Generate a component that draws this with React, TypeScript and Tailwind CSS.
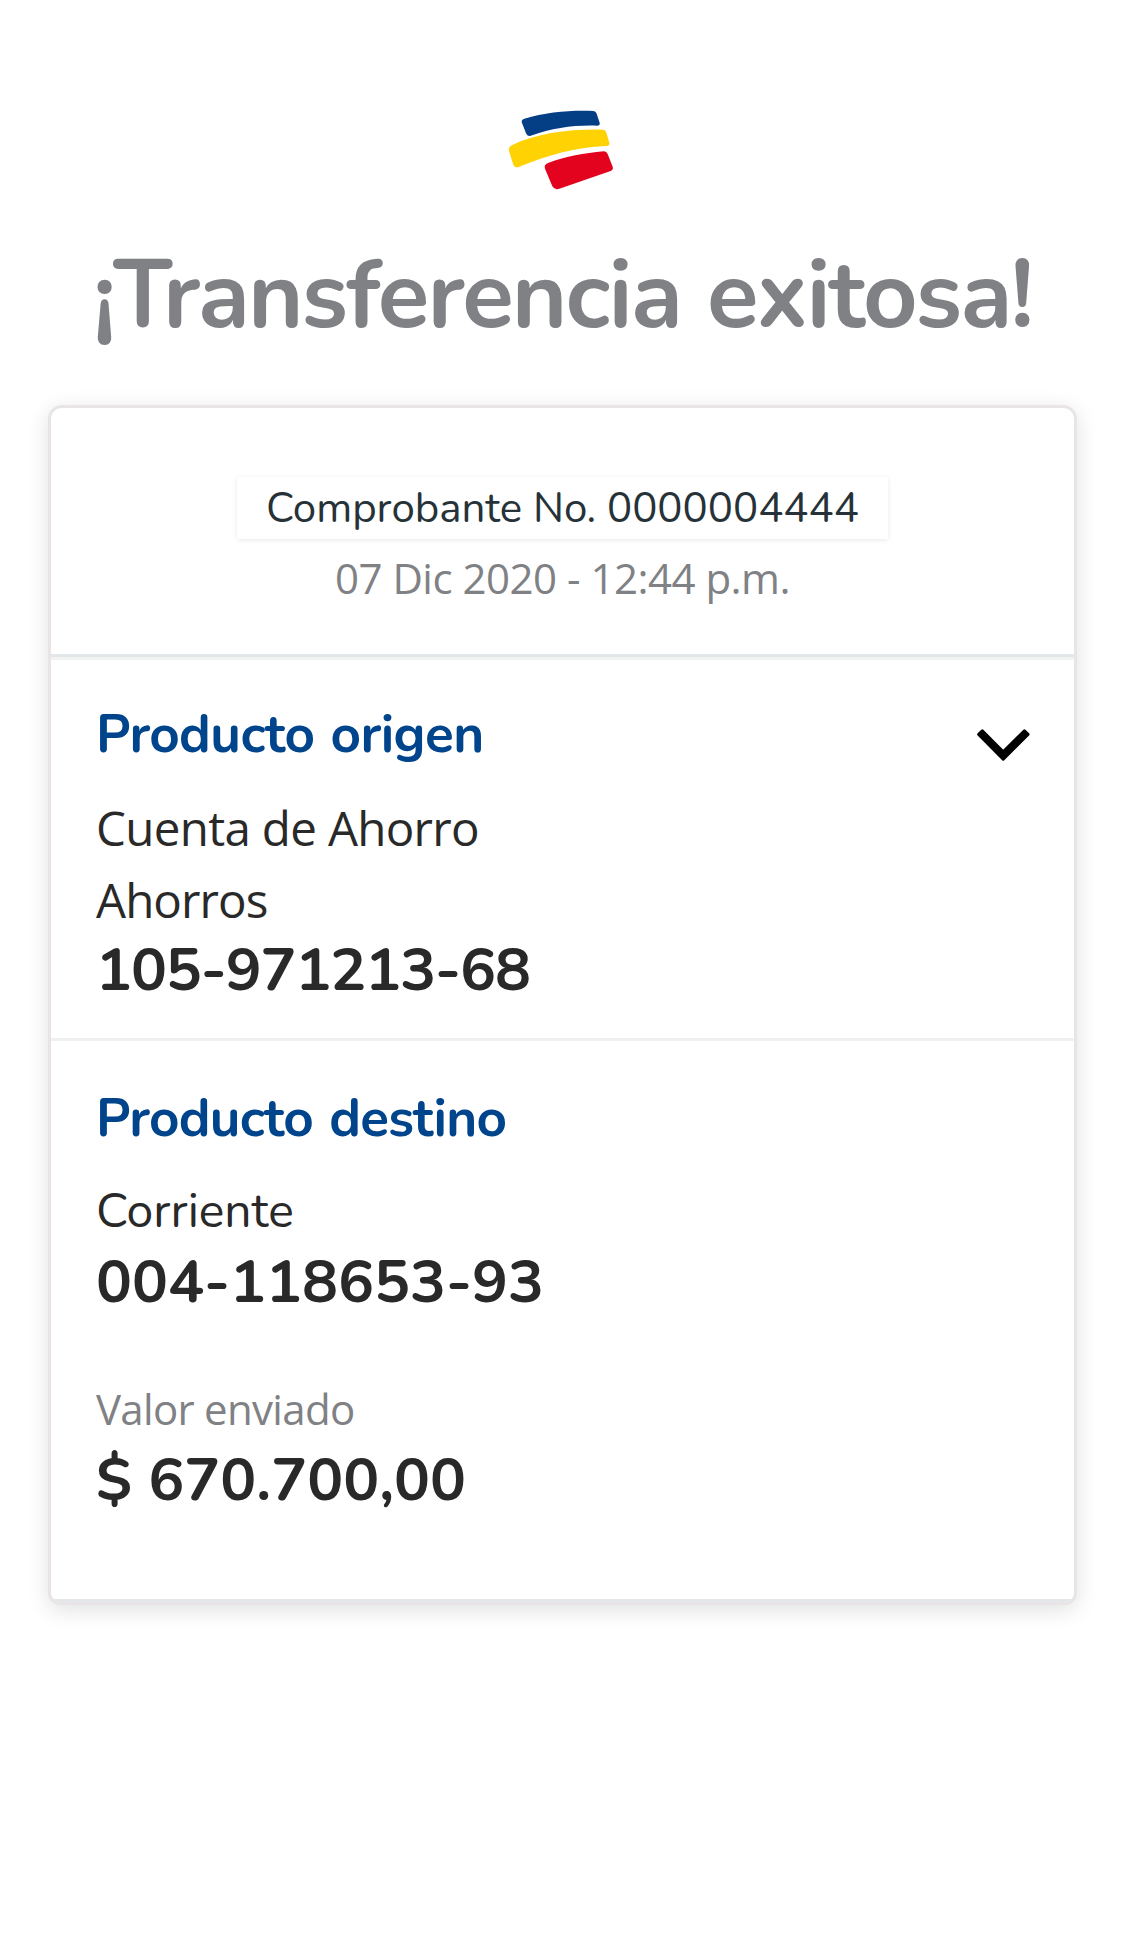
import React from 'react';

const nunito = "font-['Nunito','Lato',sans-serif]";
const openSans = "font-['Open_Sans','Noto_Sans',sans-serif]";

function Logo() {
  return (
    <svg className="h-[90px] w-[125px]" viewBox="30 45 375 270" aria-label="Bancolombia">
      <path
        fill="#043f85"
        d="M96 99 Q92 90 103 86 C170 65 250 60 310 63 Q318 63 320 71 L329 98 Q331 107 321 107 C250 105 190 114 122 137 Q112 140 108 130 Z"
      />
      <path
        fill="#ffd203"
        d="M57 183 Q55 170 67 165 C140 130 240 117 338 119 Q347 119 349 128 L358 158 Q360 167 350 168 C250 172 170 198 88 230 Q74 235 70 224 Z"
      />
      <path
        fill="#e3031e"
        d="M165 236 Q161 224 174 219 C230 199 280 190 342 184 Q350 184 353 192 L368 230 Q371 239 362 243 L208 296 Q194 301 187 289 Z"
      />
    </svg>
  );
}

function Chevron() {
  return (
    <svg className="h-9 w-14" viewBox="974 727 56 36">
      <path
        d="M977.7 734.4 L981.3 730.9 L1002.2 751.8 L1023.4 730.9 L1027 734.4 L1002.2 759.2 Z"
        fill="#000"
        stroke="#000"
        strokeWidth="3"
        strokeLinejoin="round"
      />
    </svg>
  );
}

export default function App() {
  return (
    <main className="flex min-h-[1941px] w-full flex-col items-center bg-white pt-[105px]">
      <Logo />
      <h1
        className={`${nunito} mt-10 whitespace-nowrap pt-px text-[95px] font-bold leading-[120px] tracking-[-1.83px] text-[#808185] [word-spacing:2px]`}
      >
        ¡Transferencia exitosa!
      </h1>

      <section className="mt-[49px] flex h-[1200px] w-[1029px] flex-col overflow-hidden rounded-[14px] rounded-b-[12px] border-[3px] border-[#e9e5e6] bg-white shadow-[0_5px_22px_rgba(0,0,0,0.12)]">
        <header className="flex h-[252px] flex-col items-center border-b-[3px] border-[#f1f2f2] pt-[69px] shadow-[inset_0_-3px_0_#e3e7ea]">
          <div
            className={`${nunito} h-[62px] w-[651px] text-center text-[42px] leading-[64px] text-[#263238] shadow-[0_1px_5px_rgba(0,0,0,0.09)]`}
          >
            Comprobante No. 0000004444
          </div>
          <div
            className={`${openSans} mt-[9px] text-[42px] leading-[60px] tracking-[-0.5px] text-[#808185]`}
          >
            07 Dic 2020 - 12:44 p.m.
          </div>
        </header>

        <div className="flex h-[381px] items-start justify-between border-b-[3px] border-[#f0f0f0] pl-[45px] pr-[43px] pt-[45px]">
          <div>
            <h2
              className={`${nunito} text-[53px] font-bold leading-[60px] tracking-[-0.6px] text-[#00448c] [word-spacing:2.5px]`}
            >
              Producto origen
            </h2>
            <p
              className={`${openSans} mt-[27px] text-[47.5px] leading-[72px] tracking-[-0.67px] text-[#292929]`}
            >
              Cuenta de Ahorro
            </p>
            <p
              className={`${openSans} text-[47.5px] leading-[72px] tracking-[-0.9px] text-[#292929]`}
            >
              Ahorros
            </p>
            <p
              className={`${nunito} mt-1 text-[60px] font-bold leading-[60px] tracking-[-1.1px] text-[#292929]`}
            >
              105-971213-68
            </p>
          </div>
          <div className="mt-[22px]">
            <Chevron />
          </div>
        </div>

        <div className="grow border-b-[3px] border-[#e3e7ea] pl-[45px] pt-12">
          <h2
            className={`${nunito} text-[53px] font-bold leading-[60px] tracking-[-0.75px] text-[#00448c] [word-spacing:2.5px]`}
          >
            Producto destino
          </h2>
          <p className={`${nunito} mt-[26px] text-[48px] leading-[72px] text-[#292929]`}>
            Corriente
          </p>
          <p
            className={`${nunito} mt-[5px] text-[60px] font-bold leading-[60px] text-[#292929]`}
          >
            004-118653-93
          </p>
          <p
            className={`${openSans} mt-[67px] text-[42px] leading-[60px] tracking-[-0.7px] text-[#808185]`}
          >
            Valor enviado
          </p>
          <p
            className={`${nunito} mt-[11px] text-[60px] font-bold leading-[60px] text-[#292929]`}
          >
            $ 670.700,00
          </p>
        </div>
      </section>
    </main>
  );
}
